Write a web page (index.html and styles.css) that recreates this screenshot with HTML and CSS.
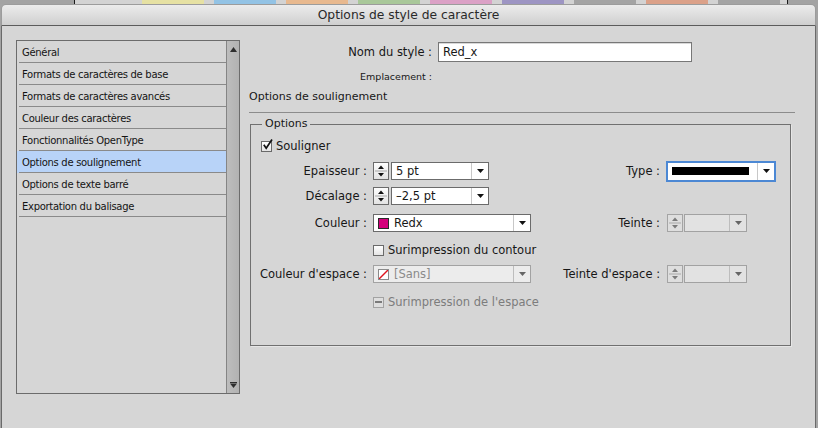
FILE: index.html
```html
<!DOCTYPE html>
<html lang="fr">
<head>
<meta charset="utf-8">
<title>Options de style de caractère</title>
<link rel="stylesheet" href="styles.css">
</head>
<body>
<div class="strip"></div>
<div class="window">
  <div class="titlebar">Options de style de caractère</div>
  <div class="content">
    <div class="list">
      <div class="items">
        <div class="item">Général</div>
        <div class="item">Formats de caractères de base</div>
        <div class="item">Formats de caractères avancés</div>
        <div class="item">Couleur des caractères</div>
        <div class="item">Fonctionnalités OpenType</div>
        <div class="item selected">Options de soulignement</div>
        <div class="item">Options de texte barré</div>
        <div class="item">Exportation du balisage</div>
      </div>
      <div class="scroll">
        <svg class="sarrow" width="7" height="5" viewBox="0 0 7 5"><polygon points="0,5 7,5 3.5,0"/></svg>
        <svg class="sarrow" width="7" height="6" viewBox="0 0 7 6"><rect x="0" y="0" width="7" height="1"/><polygon points="0,1.5 7,1.5 3.5,6"/></svg>
      </div>
    </div>

    <div class="panel">
      <div class="name-row">
        <span class="nlabel">Nom du style :</span>
        <span class="textfield">Red_x</span>
      </div>
      <div class="loc-row"><span class="nlabel small">Emplacement :</span></div>
      <div class="section">Options de soulignement</div>
      <hr class="rule">

      <fieldset class="group">
        <legend>Options</legend>

        <div class="crow first">
          <span class="cb"><svg width="11" height="11" viewBox="0 0 11 11"><path d="M1.8 4.8 L4.2 8.2 L10 -0.5" fill="none" stroke="#111" stroke-width="1.7"/></svg></span>
          <span>Souligner</span>
        </div>

        <div class="row r-ep">
          <div class="left">
            <span class="lbl">Epaisseur :</span>
            <span class="spin"><svg width="14" height="16" viewBox="0 0 14 16"><polygon points="4,6 10,6 7,2.5"/><rect x="1" y="7.5" width="12" height="1" class="mid"/><polygon points="4,10 10,10 7,13.5"/></svg></span>
            <span class="combo w98"><span class="val">5 pt</span><span class="btn"><svg width="7" height="4" viewBox="0 0 7 4"><polygon points="0,0 7,0 3.5,4"/></svg></span></span>
          </div>
          <div class="right">
            <span class="rlbl">Type :</span>
            <span class="combo focus"><span class="val"><span class="linebar"></span></span><span class="btn"><svg width="7" height="4" viewBox="0 0 7 4"><polygon points="0,0 7,0 3.5,4"/></svg></span></span>
          </div>
        </div>

        <div class="row r-dec">
          <div class="left">
            <span class="lbl">Décalage :</span>
            <span class="spin"><svg width="14" height="16" viewBox="0 0 14 16"><polygon points="4,6 10,6 7,2.5"/><rect x="1" y="7.5" width="12" height="1" class="mid"/><polygon points="4,10 10,10 7,13.5"/></svg></span>
            <span class="combo w98"><span class="val">–2,5 pt</span><span class="btn"><svg width="7" height="4" viewBox="0 0 7 4"><polygon points="0,0 7,0 3.5,4"/></svg></span></span>
          </div>
        </div>

        <div class="row r-col">
          <div class="left">
            <span class="lbl">Couleur :</span>
            <span class="combo w158"><span class="val"><span class="sw"></span>Redx</span><span class="btn"><svg width="7" height="4" viewBox="0 0 7 4"><polygon points="0,0 7,0 3.5,4"/></svg></span></span>
          </div>
          <div class="right">
            <span class="rlbl">Teinte :</span>
            <span class="spin disabled"><svg width="14" height="16" viewBox="0 0 14 16"><polygon points="4,6 10,6 7,2.5"/><rect x="1" y="7.5" width="12" height="1" class="mid"/><polygon points="4,10 10,10 7,13.5"/></svg></span>
            <span class="combo w63 disabled"><span class="val"></span><span class="btn"><svg width="7" height="4" viewBox="0 0 7 4"><polygon points="0,0 7,0 3.5,4"/></svg></span></span>
          </div>
        </div>

        <div class="crow r-sur">
          <span class="cb"></span>
          <span>Surimpression du contour</span>
        </div>

        <div class="row r-esp">
          <div class="left">
            <span class="lbl">Couleur d'espace :</span>
            <span class="combo w158 disabled light"><span class="val"><span class="sw none"><svg width="9" height="9" viewBox="0 0 9 9"><line x1="0" y1="9" x2="9" y2="0" stroke="#e0141e" stroke-width="1.4"/></svg></span>[Sans]</span><span class="btn"><svg width="7" height="4" viewBox="0 0 7 4"><polygon points="0,0 7,0 3.5,4"/></svg></span></span>
          </div>
          <div class="right">
            <span class="rlbl">Teinte d'espace :</span>
            <span class="spin disabled"><svg width="14" height="16" viewBox="0 0 14 16"><polygon points="4,6 10,6 7,2.5"/><rect x="1" y="7.5" width="12" height="1" class="mid"/><polygon points="4,10 10,10 7,13.5"/></svg></span>
            <span class="combo w63 disabled"><span class="val"></span><span class="btn"><svg width="7" height="4" viewBox="0 0 7 4"><polygon points="0,0 7,0 3.5,4"/></svg></span></span>
          </div>
        </div>

        <div class="crow r-sure dim">
          <span class="cb disabled"><span class="dash"></span></span>
          <span>Surimpression de l'espace</span>
        </div>
      </fieldset>
    </div>
  </div>
</div>
</body>
</html>
```

FILE: styles.css
```css
* { box-sizing: border-box; }

html, body {
  margin: 0;
  padding: 0;
}

body {
  width: 818px;
  height: 428px;
  overflow: hidden;
  background: #a4a4a4;
  font-family: "DejaVu Sans", "Liberation Sans", sans-serif;
  color: #171717;
}

.strip {
  height: 4px;
  background: linear-gradient(to right,
    #a3a3a3 0 74px, #1a1a1a 74px 75px, #d3d3d3 75px 142px,
    #e6e1a3 142px 204px, #d3d3d3 204px 214px,
    #93c3e5 214px 276px, #d3d3d3 276px 286px,
    #e8b98f 286px 348px, #d3d3d3 348px 358px,
    #a9c89a 358px 420px, #d3d3d3 420px 430px,
    #dba1c6 430px 492px, #d3d3d3 492px 502px,
    #9d95c3 502px 564px, #d3d3d3 564px 574px,
    #a4a4a4 574px 636px, #d3d3d3 636px 646px,
    #dba189 646px 708px, #d3d3d3 708px 718px,
    #a4a4a4 718px 780px, #d3d3d3 780px 787px,
    #1a1a1a 787px 788px, #a3a3a3 788px);
}

.window {
  margin: 0 2px 0 1px;
  height: 424px;
  display: flex;
  flex-direction: column;
}

.titlebar {
  height: 22px;
  flex: none;
  border: 1px solid #9c9c9c;
  border-bottom-color: #5c5c5c;
  border-radius: 5px 5px 0 0;
  background: linear-gradient(#ececec, #cfcfcf);
  text-align: center;
  font-size: 12.3px;
  line-height: 20px;
  color: #2a2a2a;
}

.content {
  flex: 1;
  display: flex;
  align-items: flex-start;
  background: #d6d6d6;
  border-left: 1px solid #6a6a6a;
  border-right: 1px solid #6a6a6a;
  padding: 14px 0 0 14px;
}

/* ---------- left list ---------- */
.list {
  width: 224px;
  height: 354px;
  border: 1px solid #6c6c6c;
  display: flex;
  flex: none;
}

.items {
  flex: 1;
}

.item {
  height: 22px;
  padding: 1px 0 0 5px;
  line-height: 21px;
  font-size: 10px;
  letter-spacing: -0.3px;
  white-space: nowrap;
  color: #141414;
  background: linear-gradient(#8a8a8a, #8a8a8a) 2px 100% / calc(100% - 2px) 1px no-repeat;
}

.item.selected {
  background: linear-gradient(#8a8a8a, #8a8a8a) 2px 100% / calc(100% - 2px) 1px no-repeat, #b8d3f8;
}

.scroll {
  width: 13px;
  border-left: 1px solid #858585;
  background: linear-gradient(to right, #bdbdbd, #b2b2b2);
  display: flex;
  flex-direction: column;
  justify-content: space-between;
  align-items: center;
  padding: 6px 0 5px;
}

.sarrow { fill: #2e2e2e; display: block; }

/* ---------- right panel ---------- */
.panel {
  margin-left: 9px;
  width: 546px;
  flex: none;
}

.name-row {
  margin-top: 2px;
  height: 20px;
  display: flex;
  align-items: center;
  font-size: 11.5px;
}

.nlabel {
  width: 183px;
  margin-right: 6px;
  text-align: right;
  white-space: nowrap;
}

.nlabel.small {
  display: block;
  font-size: 9.5px;
  line-height: 16px;
}

.textfield {
  width: 254px;
  height: 20px;
  border: 1px solid #777;
  background: #fff;
  padding-left: 4px;
  line-height: 18px;
  box-shadow: inset 0 1px 0 #d8d8d8;
}

.loc-row {
  margin-top: 7px;
  height: 16px;
}

.section {
  margin-top: 4px;
  height: 16px;
  line-height: 16px;
  font-size: 11px;
}

.rule {
  margin: 7px 0 0;
  height: 1px;
  border: 0;
  background: #8c8c8c;
}

.group {
  margin: 4px 0 0 1px;
  width: 541px;
  height: 229px;
  min-width: 0;
  border: 1px solid #707070;
  padding: 7px 0 0 0;
  box-shadow: 1px 1px 0 #e6e6e6;
}

.group legend {
  font-size: 11px;
  line-height: 14px;
  padding: 0 3px;
  margin-left: 11px;
}

.crow {
  display: flex;
  align-items: center;
  height: 16px;
  font-size: 11.5px;
  white-space: nowrap;
}

.crow.first { padding-left: 10px; }
.crow.r-sur { margin-top: 10px; padding-left: 122px; }
.crow.r-sure { margin-top: 11px; padding-left: 122px; }
.crow.dim { color: #7c7c7c; }

.row {
  display: flex;
  align-items: center;
  height: 18px;
  font-size: 11.5px;
  white-space: nowrap;
}

.r-ep { margin-top: 8px; }
.r-dec { margin-top: 7px; }
.r-col { margin-top: 9px; }
.r-esp { margin-top: 7px; }

.left {
  display: flex;
  align-items: center;
  width: 289px;
  flex: none;
}

.lbl {
  width: 116px;
  margin-right: 6px;
  text-align: right;
}

.right {
  display: flex;
  align-items: center;
}

.rlbl {
  width: 120px;
  margin-right: 7px;
  text-align: right;
}

/* checkbox */
.cb {
  width: 11px;
  height: 11px;
  flex: none;
  border: 1px solid #6a6a6a;
  background: linear-gradient(#ffffff, #e4e4e4);
  margin-right: 4px;
  display: flex;
  align-items: center;
  justify-content: center;
}

.cb svg { display: block; overflow: visible; margin: -1px -1px 0 0; }

.cb.disabled {
  border-color: #a2a2a2;
  background: #dedede;
}

.dash {
  width: 7px;
  height: 2px;
  background: #7a7a7a;
}

/* spinner */
.spin {
  width: 16px;
  height: 18px;
  flex: none;
  border: 1px solid #6b6b6b;
  background: linear-gradient(#fdfdfd, #e3e3e3);
  margin-right: 2px;
  fill: #111;
}

.spin svg { display: block; }
.spin .mid { fill: #a8a8a8; }

.spin.disabled {
  border-color: #a4a4a4;
  background: #dedede;
  fill: #7a7a7a;
  margin-right: 1px;
}

/* combo */
.combo {
  display: flex;
  height: 18px;
  flex: none;
  border: 1px solid #6b6b6b;
  background: #fff;
}

.combo .val {
  flex: 1;
  display: flex;
  align-items: center;
  padding-left: 4px;
  overflow: hidden;
}

.combo .btn {
  width: 17px;
  flex: none;
  border-left: 1px solid #c8c8c8;
  display: flex;
  align-items: center;
  justify-content: center;
  fill: #111;
}

.combo .btn svg { display: block; }

.w98 { width: 98px; }
.w158 { width: 158px; }
.w63 { width: 63px; }

.combo.disabled {
  border-color: #a2a2a2;
  background: #e2e2e2;
  color: #8a8a8a;
}

.combo.disabled.light { background: #ececec; }
.combo.disabled .btn { fill: #666; border-left-color: #bdbdbd; }

.combo.focus {
  width: 110px;
  height: 21px;
  margin-left: -1px;
  border: 2px solid #4c88d4;
}

.linebar {
  width: 77px;
  height: 8px;
  background: #000;
}

/* swatches */
.sw {
  width: 11px;
  height: 11px;
  flex: none;
  border: 1px solid #2a2a2a;
  background: #d4007b;
  margin-right: 5px;
}

.sw.none {
  border-color: #8a8a8a;
  background: #fff;
}

.sw svg { display: block; }
```
